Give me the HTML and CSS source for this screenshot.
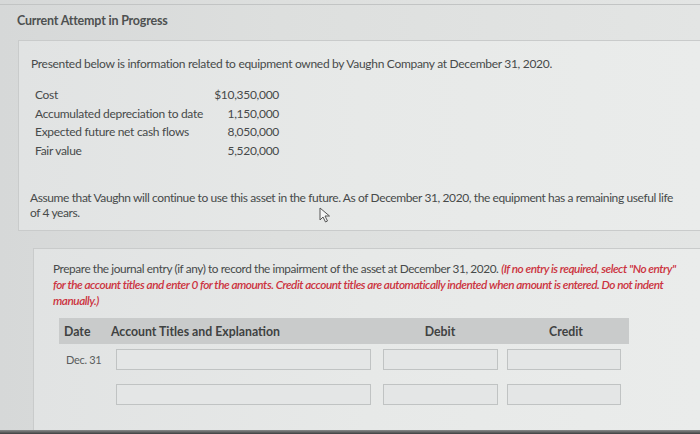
FILE: index.html
```html
<!DOCTYPE html>
<html>
<head>
<meta charset="utf-8">
<link rel="stylesheet" href="styles.css">
</head>
<body>
<div class="screen">
  <div class="topline"></div>
  <h1 class="title">Current Attempt in Progress</h1>
  <section class="card info">
    <p class="lead">Presented below is information related to equipment owned by Vaughn Company at December 31, 2020.</p>
    <div class="data">
      <span>Cost</span><span class="num">$10,350,000</span>
      <span>Accumulated depreciation to date</span><span class="num">1,150,000</span>
      <span>Expected future net cash flows</span><span class="num">8,050,000</span>
      <span>Fair value</span><span class="num">5,520,000</span>
    </div>
    <p class="assume">Assume that Vaughn will continue to use this asset in the future. As of December 31, 2020, the equipment has a remaining useful life of 4 years.</p>
    <svg class="cursor" width="12" height="16" viewBox="0 0 12 16"><path d="M1 1 L1 13 L4 10 L6.5 15 L8.5 14 L6 9 L10.5 9 Z" fill="#f4f5f5" stroke="#555" stroke-width="1" stroke-linejoin="round"/></svg>
  </section>
  <section class="card task">
    <p class="prompt">Prepare the journal entry (if any) to record the impairment of the asset at December 31, 2020. <em>(If no entry is required, select "No entry" for the account titles and enter 0 for the amounts. Credit account titles are automatically indented when amount is entered. Do not indent manually.)</em></p>
    <div class="journal">
      <div class="head">
        <span class="c-date">Date</span>
        <span class="c-acct">Account Titles and Explanation</span>
        <span class="c-debit">Debit</span>
        <span class="c-credit">Credit</span>
      </div>
      <div class="row">
        <span class="c-date date">Dec. 31</span>
        <span class="c-acct"><span class="box acct"></span></span>
        <span class="c-debit"><span class="box amt"></span></span>
        <span class="c-credit"><span class="box amt"></span></span>
      </div>
      <div class="row">
        <span class="c-date date"></span>
        <span class="c-acct"><span class="box acct"></span></span>
        <span class="c-debit"><span class="box amt"></span></span>
        <span class="c-credit"><span class="box amt"></span></span>
      </div>
    </div>
  </section>
  <div class="bezel"></div>
</div>
</body>
</html>
```
FILE: styles.css
```css
html, body {
  margin: 0;
  padding: 0;
}
body {
  width: 700px;
  height: 434px;
  overflow: hidden;
  font-family: Lato, "Open Sans", sans-serif;
  color: #474a4a;
  background: linear-gradient(90deg, #d6d8d8 0%, #dddfde 40%, #e3e5e4 100%);
}
.screen {
  position: relative;
  height: 434px;
  display: flex;
  flex-direction: column;
}
.topline {
  height: 4px;
  border-bottom: 1px solid #c2c4c4;
}
.title {
  margin: 9px 0 0 17px;
  font-size: 12.5px;
  font-weight: 700;
  letter-spacing: -0.2px;
  line-height: 14px;
  color: #4e5151;
}
.card {
  border: 1px solid #c9cbcb;
  border-right: none;
  background: linear-gradient(90deg, #e1e3e3 0%, #e7e9e8 50%, #eaeceb 100%);
  box-sizing: border-box;
}
.info {
  position: relative;
  margin: 12px 0 0 18px;
  height: 191px;
  padding: 15px 0 0 12px;
}
.lead {
  margin: 0;
  font-size: 12px;
  letter-spacing: -0.3px;
  line-height: 15px;
}
.data {
  display: grid;
  grid-template-columns: 175px 69px;
  margin: 15px 0 0 4px;
  font-size: 12px;
  letter-spacing: -0.3px;
  line-height: 18.7px;
}
.num {
  text-align: right;
}
.assume {
  margin: 29px 0 0 -1px;
  width: 650px;
  font-size: 12px;
  letter-spacing: -0.4px;
  line-height: 15px;
}
.cursor {
  position: absolute;
  left: 300px;
  top: 166px;
}
.task {
  margin: 17px 0 0 33px;
  flex: 1;
  padding: 12px 0 0 19px;
}
.prompt {
  margin: 0;
  width: 632px;
  font-size: 11.8px;
  letter-spacing: -0.4px;
  line-height: 16px;
}
.prompt em {
  color: #cc3340;
  font-style: italic;
  font-weight: 600;
  letter-spacing: -0.48px;
}
.journal {
  margin: 9px 0 0 6px;
  width: 570px;
}
.head, .row {
  display: grid;
  grid-template-columns: 52px 266px 126px 126px;
  align-items: start;
}
.head {
  height: 26px;
  align-items: center;
  background: #c9cbcb;
  font-size: 12.3px;
  font-weight: 700;
  color: #3f4242;
}
.head .c-date {
  padding-left: 5px;
}
.head .c-debit, .head .c-credit {
  text-align: center;
}
.row {
  margin-top: 5px;
  height: 30px;
}
.row + .row {
  margin-top: 5px;
}
.date {
  padding: 4px 0 0 7px;
  font-size: 11px;
  letter-spacing: -0.3px;
  color: #5a5d5d;
}
.box {
  display: block;
  height: 21px;
  box-sizing: border-box;
  border: 1px solid #c0c3c3;
  background: #e4e6e6;
}
.acct {
  width: 255px;
  margin-left: 5px;
}
.c-debit .amt {
  width: 115px;
  margin-left: 6px;
}
.c-credit .amt {
  width: 114px;
  margin-left: 4px;
}
.bezel {
  position: absolute;
  left: 0;
  right: 0;
  bottom: 0;
  height: 4px;
  background: linear-gradient(180deg, #8a8c8c, #3e4040);
}
```
